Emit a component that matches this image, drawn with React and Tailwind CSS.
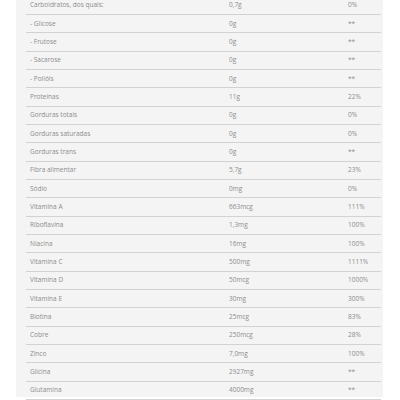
const rows = [
  ["Carboidratos, dos quais:", "0,7g", "0%"],
  ["- Glicose", "0g", "**"],
  ["- Frutose", "0g", "**"],
  ["- Sacarose", "0g", "**"],
  ["- Polióis", "0g", "**"],
  ["Proteínas", "11g", "22%"],
  ["Gorduras totais", "0g", "0%"],
  ["Gorduras saturadas", "0g", "0%"],
  ["Gorduras trans", "0g", "**"],
  ["Fibra alimentar", "5,7g", "23%"],
  ["Sódio", "0mg", "0%"],
  ["Vitamina A", "663mcg", "111%"],
  ["Riboflavina", "1,3mg", "100%"],
  ["Niacina", "16mg", "100%"],
  ["Vitamina C", "500mg", "1111%"],
  ["Vitamina D", "50mcg", "1000%"],
  ["Vitamina E", "30mg", "300%"],
  ["Biotina", "25mcg", "83%"],
  ["Cobre", "250mcg", "28%"],
  ["Zinco", "7,0mg", "100%"],
  ["Glicina", "2927mg", "**"],
  ["Glutamina", "4000mg", "**"],
];

export default function App() {
  return (
    <div className="h-[400px] w-[400px] overflow-hidden bg-white">
      <div className="ml-[16px] h-full w-[367px] bg-[#f4f4f4] pl-[10px] pr-[2px]">
        <div className="-mt-[3.4px] font-['Open_Sans',sans-serif] text-[6.5px] text-[#8c8c8c]">
          {rows.map((r, i) => (
            <div
              key={i}
              className="flex h-[18.33px] items-center border-b border-[#d2d2d2]"
            >
              <span className="w-[203px] pl-[4px]">{r[0]}</span>
              <span className="w-[119px]">{r[1]}</span>
              <span>{r[2]}</span>
            </div>
          ))}
        </div>
      </div>
    </div>
  );
}
